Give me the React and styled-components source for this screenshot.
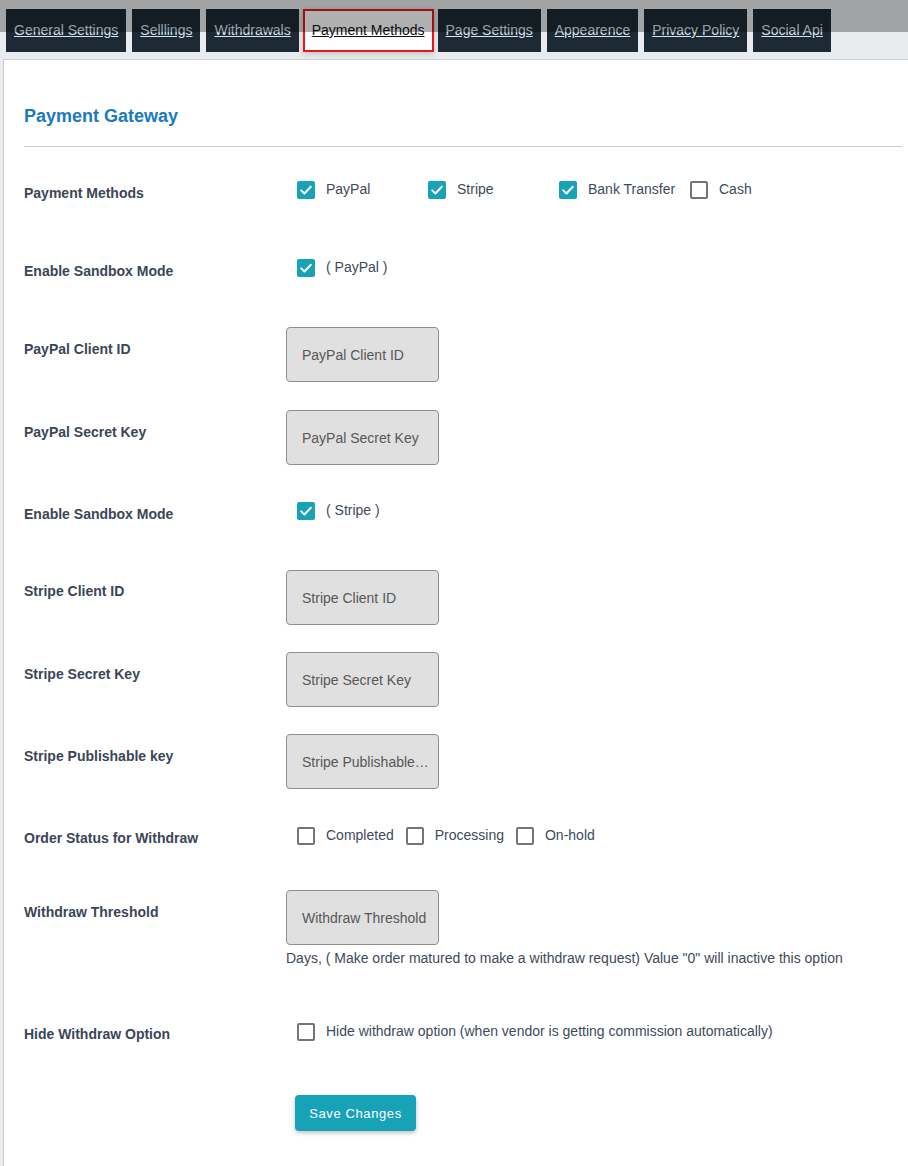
import React from "react";
import styled, { createGlobalStyle, css } from "styled-components";

const GlobalStyle = createGlobalStyle`
  html { overflow-x: hidden; }
  body {
    margin: 0;
    background: #e9ecef;
    font-family: "Liberation Sans", Arial, sans-serif;
    overflow-x: hidden;
  }
  * { box-sizing: border-box; }
`;

const TopShade = styled.div`
  position: fixed;
  top: 0;
  left: 0;
  right: 0;
  height: 32px;
  background: rgba(0, 0, 0, 0.31);
  pointer-events: none;
  z-index: 10;
`;

const Page = styled.div`
  padding: 9px 0 0 3px;
`;

const TabBar = styled.nav`
  display: flex;
  gap: 6px;
  height: 43px;
  padding-left: 3px;
  margin-bottom: 7px;
`;

const Tab = styled.a`
  display: flex;
  align-items: center;
  padding: 0 8px 1px;
  background: #1d2a35;
  color: #d8e4ef;
  font-size: 14px;
  text-decoration: underline;
  white-space: nowrap;
  cursor: pointer;
  ${(p) =>
    p.$active &&
    css`
      background: #fff;
      color: #111;
      border: 2px solid #e8151b;
      padding: 0 7px 1px;
      margin: 0 -2px;
      box-shadow: 0 2px 6px rgba(0, 0, 0, 0.18);
    `}
`;

const Panel = styled.section`
  background: #fff;
  border-top: 1px solid #ccd0d4;
  border-left: 1px solid #ccd0d4;
  margin-right: -14px;
  padding: 45px 20px 40px;
`;

const Heading = styled.h2`
  margin: 0;
  font-size: 18px;
  line-height: 22px;
  font-weight: 700;
  color: #1b79bf;
`;

const Divider = styled.hr`
  margin: 19px 0 0;
  border: 0;
  border-top: 1px solid #cccccc;
`;

const Row = styled.div`
  display: flex;
  align-items: flex-start;
  margin-top: ${(p) => p.$mt}px;
`;

const Label = styled.div`
  width: 262px;
  flex-shrink: 0;
  font-size: 14px;
  line-height: 20px;
  font-weight: 700;
  color: #3a4658;
  padding-top: ${(p) => p.$pt || 0}px;
`;

const Control = styled.div`
  display: flex;
  flex-direction: column;
  align-items: flex-start;
`;

const CheckGroup = styled.div`
  display: flex;
  gap: ${(p) => p.$gap}px;
  padding-left: 11px;
`;

const Option = styled.label`
  display: flex;
  align-items: center;
  gap: 11px;
  min-width: ${(p) => p.$minWidth || 0}px;
  height: 20px;
  font-size: 14px;
  line-height: 20px;
  color: #3e4a5b;
  white-space: nowrap;
  span.text {
    margin-top: -2px;
  }
`;

const Box = styled.span`
  width: 18px;
  height: 18px;
  flex-shrink: 0;
  border-radius: 2px;
  display: flex;
  align-items: center;
  justify-content: center;
  ${(p) =>
    p.$checked
      ? css`
          background: #17a2b8;
        `
      : css`
          background: #fff;
          border: 2px solid #757575;
        `}
`;

const TextInput = styled.input`
  width: 153px;
  height: 55px;
  background: #e0e0e0;
  border: 1px solid #8f8f8f;
  border-radius: 4px;
  padding: 0 6px 0 15px;
  font-family: "Liberation Sans", Arial, sans-serif;
  font-size: 14px;
  color: #333;
  text-overflow: ellipsis;
  outline: none;
  &::placeholder {
    color: #575757;
    opacity: 1;
  }
`;

const Help = styled.p`
  margin: 3px 0 0;
  font-size: 14px;
  line-height: 20px;
  color: #3e4a5b;
  white-space: nowrap;
`;

const SaveButton = styled.button`
  margin-left: 9px;
  width: 121px;
  height: 36px;
  border: none;
  border-radius: 4px;
  background: #17a2b8;
  color: #fff;
  font-family: "Liberation Sans", Arial, sans-serif;
  font-size: 13px;
  letter-spacing: 0.6px;
  box-shadow: 0 2px 4px rgba(0, 0, 0, 0.25);
  cursor: pointer;
`;

function Check({ checked, children, minWidth }) {
  return (
    <Option $minWidth={minWidth}>
      <Box $checked={checked}>
        {checked && (
          <svg width="14" height="14" viewBox="0 0 14 14">
            <polyline
              points="2.2,7.4 5.4,10.5 11.8,3.8"
              fill="none"
              stroke="#fff"
              strokeWidth="2"
              strokeLinecap="round"
              strokeLinejoin="round"
            />
          </svg>
        )}
      </Box>
      <span className="text">{children}</span>
    </Option>
  );
}

const tabs = [
  "General Settings",
  "Selllings",
  "Withdrawals",
  "Payment Methods",
  "Page Settings",
  "Appearence",
  "Privacy Policy",
  "Social Api",
];

export default function App() {
  return (
    <>
      <GlobalStyle />
      <TopShade />
      <Page>
        <TabBar>
          {tabs.map((t) => (
            <Tab key={t} $active={t === "Payment Methods"}>
              {t}
            </Tab>
          ))}
        </TabBar>
        <Panel>
          <Heading>Payment Gateway</Heading>
          <Divider />

          <Row $mt={33}>
            <Label $pt={3}>Payment Methods</Label>
            <CheckGroup $gap={11}>
              <Check checked minWidth={120}>PayPal</Check>
              <Check checked minWidth={120}>Stripe</Check>
              <Check checked minWidth={120}>Bank Transfer</Check>
              <Check>Cash</Check>
            </CheckGroup>
          </Row>

          <Row $mt={55}>
            <Label $pt={3}>Enable Sandbox Mode</Label>
            <CheckGroup $gap={11}>
              <Check checked>( PayPal )</Check>
            </CheckGroup>
          </Row>

          <Row $mt={46}>
            <Label $pt={12}>PayPal Client ID</Label>
            <Control>
              <TextInput placeholder="PayPal Client ID" />
            </Control>
          </Row>

          <Row $mt={28}>
            <Label $pt={12}>PayPal Secret Key</Label>
            <Control>
              <TextInput placeholder="PayPal Secret Key" />
            </Control>
          </Row>

          <Row $mt={36}>
            <Label $pt={3}>Enable Sandbox Mode</Label>
            <CheckGroup $gap={11}>
              <Check checked>( Stripe )</Check>
            </CheckGroup>
          </Row>

          <Row $mt={46}>
            <Label $pt={11}>Stripe Client ID</Label>
            <Control>
              <TextInput placeholder="Stripe Client ID" />
            </Control>
          </Row>

          <Row $mt={27}>
            <Label $pt={12}>Stripe Secret Key</Label>
            <Control>
              <TextInput placeholder="Stripe Secret Key" />
            </Control>
          </Row>

          <Row $mt={27}>
            <Label $pt={12}>Stripe Publishable key</Label>
            <Control>
              <TextInput placeholder="Stripe Publishable key" />
            </Control>
          </Row>

          <Row $mt={37}>
            <Label $pt={2}>Order Status for Withdraw</Label>
            <CheckGroup $gap={12}>
              <Check>Completed</Check>
              <Check>Processing</Check>
              <Check>On-hold</Check>
            </CheckGroup>
          </Row>

          <Row $mt={42}>
            <Label $pt={12}>Withdraw Threshold</Label>
            <Control>
              <TextInput placeholder="Withdraw Threshold" />
              <Help>
                Days, ( Make order matured to make a withdraw request) Value "0"
                will inactive this option
              </Help>
            </Control>
          </Row>

          <Row $mt={54}>
            <Label $pt={2}>Hide Withdraw Option</Label>
            <CheckGroup $gap={11}>
              <Check>
                Hide withdraw option (when vendor is getting commission
                automatically)
              </Check>
            </CheckGroup>
          </Row>

          <Row $mt={51}>
            <Label />
            <SaveButton>Save Changes</SaveButton>
          </Row>
        </Panel>
      </Page>
    </>
  );
}
